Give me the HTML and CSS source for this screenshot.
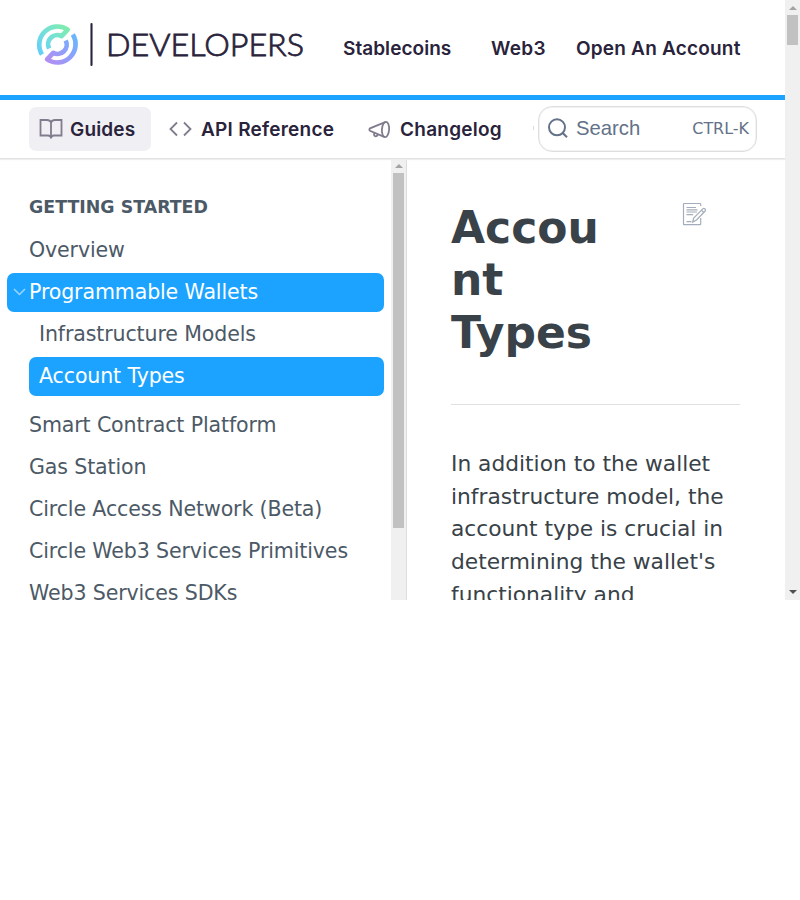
FILE: index.html
```html
<!DOCTYPE html>
<html lang="en">
<head>
<meta charset="utf-8">
<title>Account Types</title>
<link rel="stylesheet" href="styles.css">
</head>
<body>
<div class="viewport">
  <div class="page">
    <header class="top">
      <svg class="logo" width="270" height="50" viewBox="0 0 270 50">
        <defs>
          <linearGradient id="ga" x1="0" y1="1" x2="1" y2="0"><stop offset="0" stop-color="#62cdfb"/><stop offset=".5" stop-color="#74e0da"/><stop offset="1" stop-color="#80edaa"/></linearGradient>
          <linearGradient id="gb" x1="0" y1="1" x2="1" y2="0"><stop offset="0" stop-color="#b48df2"/><stop offset=".5" stop-color="#8f9ffa"/><stop offset="1" stop-color="#65b8ff"/></linearGradient>
        </defs>
        <g transform="translate(42.400 24.500)" fill="none" stroke-width="4.700" stroke-linejoin="round">
          <path stroke="url(#ga)" d="M-15.400 10A18.300 18.300 0 0 1 10.300-14.900L4.200-8.300A9.200 9.200 0 0 0-8.300 4"/>
          <path stroke="url(#gb)" d="M15.400-10A18.300 18.300 0 0 1-10.300 14.900L-4.200 8.300A9.200 9.200 0 0 0 8.300-4"/>
        </g>
        <path d="M76.500 4v41" stroke="#29233b" stroke-width="2.100" stroke-linecap="round"/>
        <text class="logo-text" x="91" y="35.500" textLength="198" lengthAdjust="spacingAndGlyphs">DEVELOPERS</text>
      </svg>
      <nav class="links">
        <a class="l1">Stablecoins</a><a class="l2">Web3</a><a class="l3">Open An Account</a>
      </nav>
    </header>
    <div class="bar">
      <a class="tab tab-on"><svg width="24" height="22" viewBox="0 0 24 22"><path d="M12 4.300Q11 2 8 2H1.500V17.500H9Q12 17.500 12 20.500Q12 17.500 15 17.500H22.500V2H16Q13 2 12 4.300V20"/></svg><span class="t1">Guides</span></a>
      <a class="tab tab-api"><svg width="24" height="22" viewBox="0 0 24 22"><path d="M9 4.500 2.500 11l6.500 6.500M16 4.500 22.500 11l-6.500 6.500"/></svg><span class="t2">API Reference</span></a>
      <a class="tab tab-log"><svg width="24" height="22" viewBox="0 0 24 22"><ellipse cx="18.500" cy="11.500" rx="3.600" ry="7.700" transform="rotate(4 18.500 11.500)"/><path d="M18.800 3.800 3 10.400Q1.700 11.500 3 12.800L17.700 19.200M7.200 15.200Q6.500 18 8.700 18.300Q10.500 18.200 10.800 16.800"/></svg><span class="t3">Changelog</span></a>
      <span class="more"></span>
      <div class="search">
        <svg width="22" height="22" viewBox="0 0 22 22"><circle cx="10" cy="10.300" r="8"/><path d="m15.700 16 4.300 4.200"/></svg>
        <span class="ph">Search</span><span class="key">CTRL-K</span>
      </div>
    </div>
    <div class="body">
      <aside class="side">
        <h2>GETTING STARTED</h2>
        <a class="item">Overview</a>
        <a class="item active"><svg width="13" height="8" viewBox="0 0 13 8"><path d="m1 1 5.500 5.500L12 1"/></svg>Programmable Wallets</a>
        <a class="item sub">Infrastructure Models</a>
        <a class="item sub active-sub">Account Types</a>
        <a class="item">Smart Contract Platform</a>
        <a class="item">Gas Station</a>
        <a class="item">Circle Access Network (Beta)</a>
        <a class="item">Circle Web3 Services Primitives</a>
        <a class="item">Web3 Services SDKs</a>
      </aside>
      <div class="side-scroll"><i class="up"></i><b></b></div>
      <main>
        <div class="head">
          <h1>Account Types</h1>
          <svg width="24" height="24" viewBox="0 0 24 24"><path d="M18.700 4V2Q18.700 1.500 18 1.500H2Q1.500 1.500 1.500 2v20q0 .7.500.700h16q.7 0 .7-.700v-6M4.500 5.500H14M4.500 7.800h11M4.500 10h10.500M4.500 12.700H11M4.500 19.700h5M10.700 20l1-4L21 6.700q1-.7 2 .3t.2 2L14.500 18Z M19.500 8.200l2.300 2.300"/></svg>
        </div>
        <p>In addition to the wallet infrastructure model, the account type is crucial in determining the wallet's functionality and</p>
      </main>
    </div>
  </div>
  <div class="page-scroll"><i class="up"></i><b></b><i class="down"></i></div>
</div>
</body>
</html>
```
FILE: styles.css
```css
* { box-sizing: border-box; }
body { margin: 0; background: #fff; font-family: "DejaVu Sans", sans-serif; }
.viewport { width: 800px; height: 600px; display: flex; overflow: hidden; }
.page { width: 785px; height: 600px; display: flex; flex-direction: column; }
.top { height: 100px; flex: none; display: flex; border-bottom: 5px solid #1ba3ff; padding: 20px 0 0 15px; }
.logo { flex: none; overflow: visible; }
.logo-text { font: 300 31px Lato, sans-serif; fill: #29233b; stroke: #29233b; stroke-width: .8; }
.links { display: flex; font: 600 19px/24px Inter, sans-serif; color: #29233b; padding-top: 17px; margin-left: 58px; white-space: nowrap; }
.links a { flex: none; }
.l1 { width: 148px; letter-spacing: .05px; } .l2 { width: 85px; letter-spacing: .3px; } .l3 { letter-spacing: .2px; }
.bar { height: 59px; flex: none; display: flex; border-bottom: 1px solid #e2e2e4; padding: 6px 0 0 29px; position: relative; z-index: 1; box-shadow: 0 1px 1px #eee; }
.tab { height: 44px; margin-top: 1px; display: flex; align-items: center; padding-left: 10px; gap: 7px; font: 600 19px/24px Inter, sans-serif; letter-spacing: .25px; color: #29233b; white-space: nowrap; flex: none; border-radius: 7px; }
.tab span { padding-top: 2px; }
.tab svg { fill: none; stroke: #817c8d; stroke-width: 1.800; flex: none; }
.tab-on { width: 122px; background: #f0eff4; }
.t1 { letter-spacing: .15px; }
.tab-api { width: 199px; padding-left: 17px; gap: 9px; }
.tab-log { width: 183px; padding-left: 17px; gap: 9px; }
.more { width: 1px; height: 4px; background: #ddd; margin-top: 20px; }
.search { width: 219px; height: 46px; margin-left: 4px; border: 1px solid #dedee0; box-shadow: inset 0 0 0 1px #f2f2f3; border-radius: 14px; display: flex; align-items: center; padding: 0 7px 2px 8px; color: #637288; flex: none; }
.search svg { fill: none; stroke: #637288; stroke-width: 2; }
.ph { font: 20.300px/24px "Liberation Sans", sans-serif; margin-left: 7px; }
.key { margin-left: auto; font-size: 15.950px; }
.body { flex: 1; min-height: 0; display: flex; overflow: hidden; }
.side { width: 391px; flex: none; padding: 37px 7px 0; color: #4c5966; overflow: hidden; }
.side h2 { margin: 0 0 13px 22px; font-size: 17.400px; line-height: 22px; }
.item { display: block; position: relative; height: 39px; margin-bottom: 3px; padding-left: 22px; font-size: 20.550px; letter-spacing: -.13px; line-height: 39px; border-radius: 7px; white-space: nowrap; }
.active, .active-sub { background: #1ba3ff; color: #fff; }
.item svg { position: absolute; left: 6px; top: 15px; fill: none; stroke: #9bd6ff; stroke-width: 1.500; }
.sub { margin-left: 22px; padding-left: 10px; }
.active-sub { margin-bottom: 10px; }
.side-scroll { width: 16px; flex: none; background: #f0f0f0; border-right: 1px solid #ddd; display: flex; flex-direction: column; padding: 5px 2px 0; }
.side-scroll b { display: block; width: 11px; height: 355px; background: #c1c1c1; margin-top: 5px; }
.up { width: 0; height: 4px; border: 4px solid transparent; border-top: 0; border-bottom-color: #a3a3a3; margin-left: 2px; }
main { flex: 1; padding: 43px 45px 0 44px; color: #384248; min-width: 0; }
.head { display: flex; justify-content: space-between; height: 203px; border-bottom: 1px solid #dfe1e3; padding-right: 34px; }
h1 { margin: 0; width: 160px; font-size: 44px; line-height: 52.300px; overflow-wrap: anywhere; }
.head svg { fill: none; stroke: #a4adbb; stroke-width: 1.200; flex: none; }
main p { margin: 43px 0 0; font-size: 21.750px; line-height: 32.620px; }
.page-scroll { width: 15px; background: #f0f0f0; display: flex; flex-direction: column; padding: 6px 2px 0; }
.page-scroll b { width: 11px; height: 30px; margin-top: 5px; background: #c1c1c1; flex: none; }
.down { width: 0; height: 4px; border: 4px solid transparent; border-bottom: 0; border-top-color: #505050; margin: auto 0 6px 2px; }
```
